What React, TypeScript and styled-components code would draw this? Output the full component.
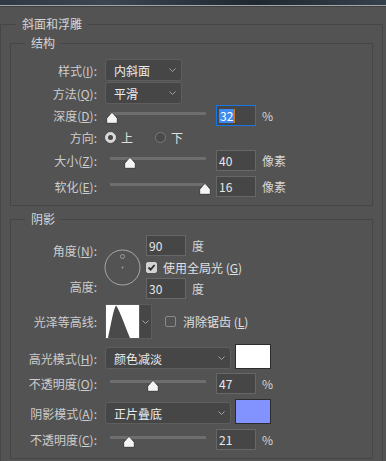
import styled, { createGlobalStyle } from "styled-components";

const GlobalStyle = createGlobalStyle`
  html, body {
    margin: 0;
    padding: 0;
    background: #535353;
  }
  body {
    font-family: "Noto Sans CJK SC", "Noto Sans", sans-serif;
    font-size: 12px;
    color: #d0d0d0;
  }
`;

const Page = styled.div`
  width: 386px;
  height: 461px;
  overflow: hidden;
  background: #535353;
`;

const TitleStrip = styled.div`
  height: 5px;
  background: linear-gradient(90deg, #2e3944, #3a4551 28%, #2a343e 50%, #1f2830 66%, #34404b);
  border-bottom: 1px solid #a3a6a9;
  box-shadow: 0 1px 0 #404040;
`;

const OuterGroup = styled.fieldset`
  margin: 10px 3px 0 0;
  padding: 0 9px 20px 9px;
  min-width: 0;
  border: 1px solid #464646;
`;

const Group = styled.fieldset<{ $mt: number }>`
  margin: ${(p) => p.$mt}px 0 0 0;
  padding: 8px 0 8px 0;
  min-width: 0;
  border: 1px solid #464646;
`;

const Legend = styled.legend<{ $indent: number }>`
  margin-left: ${(p) => p.$indent}px;
  padding: 0 6px;
  line-height: 16px;
  color: #d6d6d6;
`;

const Row = styled.div<{ $h?: number; $mt?: number }>`
  display: flex;
  align-items: center;
  height: ${(p) => p.$h ?? 21}px;
  margin-top: ${(p) => p.$mt ?? 0}px;
`;

const Label = styled.div`
  width: 86px;
  flex: none;
  margin-right: 8px;
  text-align: right;
  white-space: nowrap;
  line-height: 21px;
  color: #cdcdcd;
`;

const Key = styled.u`
  text-underline-offset: 1px;
`;

const Select = styled.div<{ $w: number }>`
  width: ${(p) => p.$w}px;
  height: 22px;
  box-sizing: border-box;
  flex: none;
  display: flex;
  align-items: center;
  justify-content: space-between;
  padding: 0 5px 0 8px;
  background: #464646;
  border: 1px solid #5e5e5e;
  border-radius: 3px;
  color: #ececec;
`;

const Field = styled.div<{ $focus?: boolean }>`
  width: 40px;
  height: 21px;
  box-sizing: border-box;
  flex: none;
  display: flex;
  align-items: center;
  padding-left: 2px;
  background: #464646;
  border: 1px solid ${(p) => (p.$focus ? "#1b74e4" : "#676767")};
  color: #e8e8e8;
`;

const Selected = styled.span`
  background: #3d8af0;
  color: #ffffff;
  line-height: 14px;
  padding: 0 1px;
  border-right: 1px solid #c8782a;
`;

const Unit = styled.span`
  margin-left: 6px;
  color: #d6d6d6;
`;

const SliderBox = styled.div`
  position: relative;
  width: 111px;
  height: 21px;
  flex: none;
`;

const Track = styled.div`
  margin: 7px 0 0 5px;
  width: 96px;
  height: 3px;
  background: #6e6e6e;
`;

const ThumbIcon = styled.svg`
  position: absolute;
  top: 7px;
  width: 12px;
  height: 12px;
`;

const Radio = styled.span<{ $on?: boolean }>`
  width: 11px;
  height: 11px;
  box-sizing: border-box;
  flex: none;
  border-radius: 50%;
  display: inline-flex;
  align-items: center;
  justify-content: center;
  border: 1px solid ${(p) => (p.$on ? "#d9d9d9" : "#7a7a7a")};
  background: ${(p) => (p.$on ? "#d9d9d9" : "#4a4a4a")};

  &::after {
    content: "";
    width: 5px;
    height: 5px;
    border-radius: 50%;
    background: ${(p) => (p.$on ? "#474747" : "transparent")};
  }
`;

const Option = styled.span<{ $gap: number }>`
  margin: 0 ${(p) => p.$gap}px 0 5px;
  color: #e0e0e0;
`;

const AngleGrid = styled.div`
  display: grid;
  grid-template-columns: 93px 42px auto;
  grid-template-rows: 21px 20px 21px;
  row-gap: 1px;
`;

const GridLabel = styled.div<{ $row: number; $pt: number }>`
  grid-column: 1;
  grid-row: ${(p) => p.$row};
  padding: ${(p) => p.$pt}px 7px 0 0;
  text-align: right;
  line-height: 17px;
  white-space: nowrap;
  color: #cdcdcd;
`;

const DialCell = styled.div`
  grid-column: 2;
  grid-row: 1 / 4;
  align-self: center;
  display: flex;
`;

const Cell = styled.div<{ $row: number }>`
  grid-column: 3;
  grid-row: ${(p) => p.$row};
  display: flex;
  align-items: center;
`;

const Check = styled.span<{ $on?: boolean }>`
  width: 11px;
  height: 11px;
  box-sizing: border-box;
  flex: none;
  display: inline-flex;
  align-items: center;
  justify-content: center;
  border-radius: 2px;
  border: 1px solid ${(p) => (p.$on ? "#d3d3d3" : "#8a8a8a")};
  background: ${(p) => (p.$on ? "#d3d3d3" : "transparent")};
`;

const CheckText = styled.span<{ $ml: number }>`
  margin-left: ${(p) => p.$ml}px;
  color: #e0e0e0;
  white-space: nowrap;
`;

const ContourPicker = styled.div`
  width: 47px;
  height: 35px;
  box-sizing: border-box;
  flex: none;
  display: flex;
  border: 1px solid #5c5c5c;
  background: #464646;
`;

const ContourArrow = styled.div`
  flex: 1;
  display: flex;
  align-items: center;
  justify-content: center;
  border-left: 1px solid #5c5c5c;
`;

const Swatch = styled.div<{ $color: string }>`
  width: 36px;
  height: 25px;
  box-sizing: border-box;
  flex: none;
  align-self: flex-end;
  margin-left: 4px;
  background: ${(p) => p.$color};
  border: 1px solid #2c2c2c;
`;

const Chevron = () => (
  <svg width="7" height="4" viewBox="0 0 7 4">
    <polyline points="0.5,0.5 3.5,3.5 6.5,0.5" fill="none" stroke="#a2a2a2" strokeWidth="1" />
  </svg>
);

const Slider = ({ pos }: { pos: number }) => (
  <SliderBox>
    <Track />
    <ThumbIcon viewBox="0 0 12 12" style={{ left: 5 + pos * 95 - 6 }}>
      <path
        d="M6 0.7 Q6.6 0.7 7.2 1.5 L11.3 6.3 V11.3 H0.7 V6.3 L4.8 1.5 Q5.4 0.7 6 0.7 Z"
        fill="#f4f4f4"
        stroke="#2a2a2a"
        strokeWidth="0.8"
      />
    </ThumbIcon>
  </SliderBox>
);

const AngleDial = () => (
  <svg width="37" height="37" viewBox="0 0 37 37">
    <circle cx="18.5" cy="18.5" r="17.5" fill="none" stroke="#a8a8a8" strokeWidth="1" />
    <circle cx="18.5" cy="7.5" r="2" fill="none" stroke="#9a9a9a" strokeWidth="1" />
    <circle cx="18.5" cy="18.5" r="0.9" fill="#a0a0a0" />
  </svg>
);

const CheckMark = () => (
  <svg width="9" height="9" viewBox="0 0 9 9">
    <polyline points="1.5,4.5 3.6,6.6 7.6,2" fill="none" stroke="#2e2e2e" strokeWidth="1.8" />
  </svg>
);

const ContourGraph = () => (
  <svg width="33" height="33" viewBox="0 0 33 33">
    <rect width="33" height="33" fill="#ffffff" />
    <path d="M2 33 C4.5 22 7.5 4 10 0.5 C13 4 19.5 22 24 33 Z" fill="#4a4a4a" />
  </svg>
);

export default function App() {
  return (
    <Page>
      <GlobalStyle />
      <TitleStrip />
      <OuterGroup>
        <Legend $indent={6}>斜面和浮雕</Legend>

        <Group $mt={3}>
          <Legend $indent={14}>结构</Legend>
          <Row $h={22}>
            <Label>样式(<Key>I</Key>):</Label>
            <Select $w={77}>
              内斜面
              <Chevron />
            </Select>
          </Row>
          <Row $h={22} $mt={1}>
            <Label>方法(<Key>Q</Key>):</Label>
            <Select $w={77}>
              平滑
              <Chevron />
            </Select>
          </Row>
          <Row $mt={1}>
            <Label>深度(<Key>D</Key>):</Label>
            <Slider pos={0.02} />
            <Field $focus>
              <Selected>32</Selected>
            </Field>
            <Unit>%</Unit>
          </Row>
          <Row $h={22}>
            <Label>方向:</Label>
            <Radio $on />
            <Option $gap={22}>上</Option>
            <Radio />
            <Option $gap={0}>下</Option>
          </Row>
          <Row $mt={2}>
            <Label>大小(<Key>Z</Key>):</Label>
            <Slider pos={0.21} />
            <Field>40</Field>
            <Unit>像素</Unit>
          </Row>
          <Row $mt={5}>
            <Label>软化(<Key>E</Key>):</Label>
            <Slider pos={1} />
            <Field>16</Field>
            <Unit>像素</Unit>
          </Row>
        </Group>

        <Group $mt={5}>
          <Legend $indent={14}>阴影</Legend>
          <AngleGrid>
            <GridLabel $row={1} $pt={7}>
              角度(<Key>N</Key>):
            </GridLabel>
            <GridLabel $row={3} $pt={0}>
              高度:
            </GridLabel>
            <DialCell>
              <AngleDial />
            </DialCell>
            <Cell $row={1}>
              <Field>90</Field>
              <Unit>度</Unit>
            </Cell>
            <Cell $row={2}>
              <Check $on>
                <CheckMark />
              </Check>
              <CheckText $ml={6}>
                使用全局光 (<Key>G</Key>)
              </CheckText>
            </Cell>
            <Cell $row={3}>
              <Field>30</Field>
              <Unit>度</Unit>
            </Cell>
          </AngleGrid>

          <Row $h={35} $mt={5}>
            <Label>光泽等高线:</Label>
            <ContourPicker>
              <ContourGraph />
              <ContourArrow>
                <Chevron />
              </ContourArrow>
            </ContourPicker>
            <Check style={{ marginLeft: 13 }} />
            <CheckText $ml={7}>
              消除锯齿 (<Key>L</Key>)
            </CheckText>
          </Row>

          <Row $h={22} $mt={8}>
            <Label>高光模式(<Key>H</Key>):</Label>
            <Select $w={126}>
              颜色减淡
              <Chevron />
            </Select>
            <Swatch $color="#ffffff" />
          </Row>
          <Row $mt={4}>
            <Label>不透明度(<Key>O</Key>):</Label>
            <Slider pos={0.45} />
            <Field>47</Field>
            <Unit>%</Unit>
          </Row>
          <Row $h={22} $mt={8}>
            <Label>阴影模式(<Key>A</Key>):</Label>
            <Select $w={126}>
              正片叠底
              <Chevron />
            </Select>
            <Swatch $color="#8293ff" />
          </Row>
          <Row $mt={5}>
            <Label>不透明度(<Key>C</Key>):</Label>
            <Slider pos={0.2} />
            <Field>21</Field>
            <Unit>%</Unit>
          </Row>
        </Group>
      </OuterGroup>
    </Page>
  );
}
